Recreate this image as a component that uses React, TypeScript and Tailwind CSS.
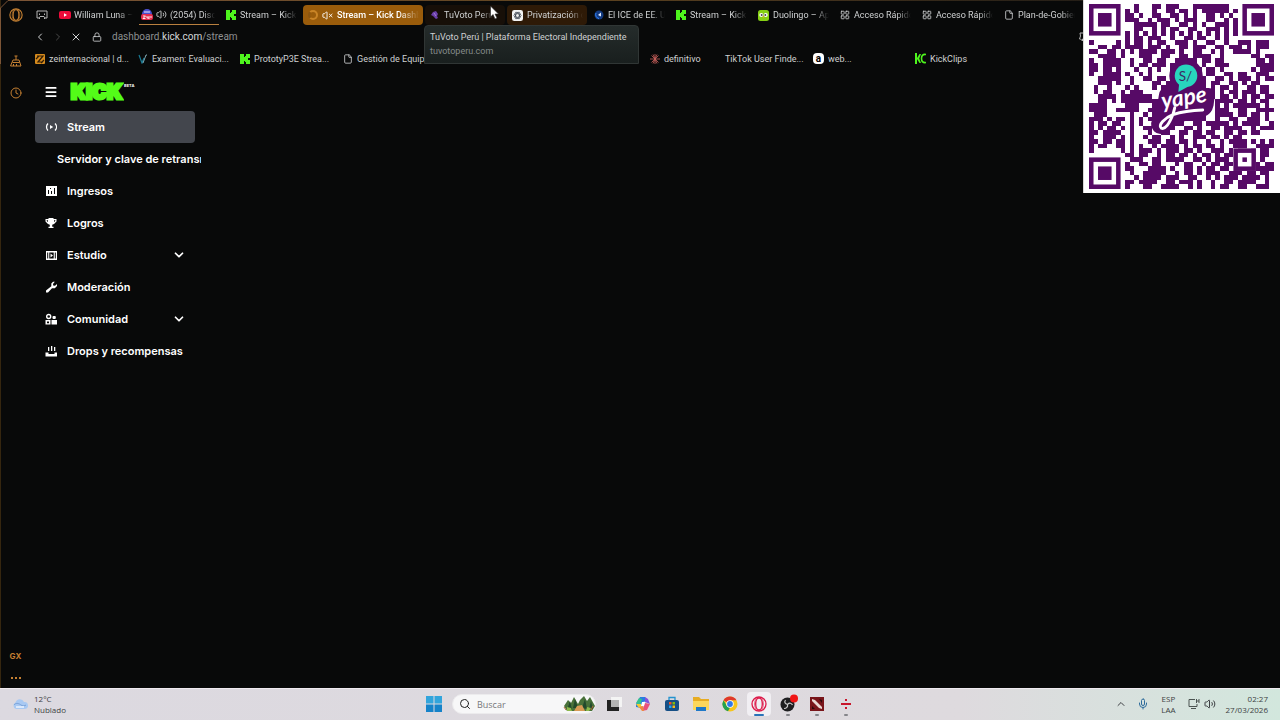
import type { ReactNode } from "react";
import clsx from "clsx";
import {
  ChevronDown,
  ChevronLeft,
  ChevronRight,
  ChevronUp,
  Clock,
  File,
  LayoutGrid,
  Lock,
  Menu,
  Mic,
  Search,
  Volume2,
  VolumeX,
  X,
} from "lucide-react";

const QR_ROWS = [
  "..........#...##.###...########..........",
  "........#.#...#..##.##.#.######.#........",
  "........##.#..##..##.#.#..##.#.#.........",
  "........###..#.###.#.###..##..#.#........",
  "..........#####.##..##.#.#..###.#........",
  "..........##..#.#.##..##..###.#.#........",
  "........#.#.#.#.#.#.#.#.#.#.#.#.#........",
  "........#.##.###..#..##.##..#.#..........",
  "#.....#.#.##.#.##..###.#..##..#..###.###.",
  "..##.##.####.###.#..##.###..##.###.#.###.",
  "##..##.#.#.####.###.#..##..#.#..####.#...",
  "..####.#...###..##..##.####..#......##.##",
  "#..####..#..##.##..#####.##.##.......##.#",
  "##.####..#.##.###.######.#..###......####",
  "##.##.#...#..#.#..#######.##.#......#.###",
  "#..####.#..#.#....#######.##..##.##..###.",
  "..#####..#..##.##.########..##.#.###.#.##",
  "..###.#..#....##.#########.##..##.#.##...",
  ".#..#...#.#...#.##########.#.##.#..##.##.",
  ".#.##..#.###....############.#.##.###.##.",
  "..####.#######..############.##.#.#.##.##",
  "..##.#.###################..####.##.#.##.",
  "####....###...############..#.#.######.#.",
  "####..#####..##############.###..##..####",
  ".###.....#..#.############..####.##.##.#.",
  "###.#.##.#.#.#############..#..##..###.#.",
  "#.##.##..#.#..#######..##.#####.#.####..#",
  "#.#.##.#.#..##.####..##.#..##.####..#.###",
  "##.####..#...#..##..##.##.##..##.##.##...",
  "#..###.#.#..#.##..#.#..###.##.#.##.......",
  "##.##.##.#...###.##.##.#..#..#.####.#.#.#",
  "#.##..##.#.#..#.####.#.##.##.#..###..####",
  "#......#.#.###.#.###.##.#..###.#.##.#.##.",
  "........##.##..#.##.##.#.##.#.##......##.",
  ".........###..##.####..##.#.###.......#..",
  "........#..##.##...#.##..#.##.##.....#.##",
  "........##...####.#..##.#.##.##......####",
  ".........#..#####..#.##.#.###..###.##.##.",
  "..........#.####.###..##..#.#.###.####.#.",
  "........##.####..##.###.#..#..##.####..#.",
  "........#...##..####..#.#..#.##..##..###.",
];

const qrPath = QR_ROWS.flatMap((row, y) =>
  [...row].map((cell, x) => (cell === "#" ? `M${x} ${y}h1v1h-1z` : ""))
).join("");

function Finder({ x, y }: { x: number; y: number }) {
  return (
    <g>
      <rect x={x + 0.5} y={y + 0.5} width="6" height="6" fill="none" stroke="#560a66" />
      <rect x={x + 2} y={y + 2} width="3" height="3" fill="#560a66" />
    </g>
  );
}

function YapeQr() {
  return (
    <div className="absolute top-0 right-0 z-20 border-l border-[#d8d8d8] bg-white pt-1 pr-1.5 pb-1 pl-[5px]">
      <svg className="size-[185px]" viewBox="0 0 41 41" role="img" aria-label="Código QR de Yape">
        <path d={qrPath} fill="#560a66" shapeRendering="crispEdges" />
        <Finder x={0} y={0} />
        <Finder x={34} y={0} />
        <Finder x={0} y={34} />
        <rect x="32" y="32" width="5" height="5" fill="#fff" />
        <rect x="32.5" y="32.5" width="4" height="4" fill="none" stroke="#560a66" />
        <rect x="34" y="34" width="1" height="1" fill="#560a66" />
        <circle cx="21.5" cy="15.9" r="3.700" fill="#560a66" />
        <path
          d="M17 18.600h9.500q1.500 0 1.400 1.500l-.3 2.400q-.4 2-2.300 2.600l-5.200 1.100-2.500 2q-2 1.200-3.200 0-1-1.200-.4-2.600l1-2.500.5-3q.2-1.500 1.500-1.500z"
          fill="#560a66"
        />
        <circle cx="21.5" cy="15.9" r="2.500" fill="#28d5bd" />
        <path d="M20 17.400l-.2 2.100 2.200-1.200z" fill="#28d5bd" />
        <text x="19.9" y="17" className="font-['Lato']" fontSize="3" fill="#3c2861">
          S/
        </text>
        <text
          x="16.3"
          y="23.2"
          className="font-['Lato'] font-bold italic"
          fontSize="5"
          fill="#fff"
          transform="rotate(-9 16.3 23.2)"
        >
          yape
        </text>
        <path
          d="M25.200 23.500C22.500 23.600 20.500 23.900 18.600 24.500 17.800 26.500 16.900 27.900 16 27.500 15.200 26.900 16.800 25.200 18.600 24.500L19 23"
          fill="none"
          stroke="#fff"
          strokeWidth=".65"
          strokeLinecap="round"
        />
      </svg>
    </div>
  );
}

/* ---------- favicons ---------- */

function KickMark() {
  return (
    <svg className="size-2.5 shrink-0" viewBox="0 0 10 10" fill="#4ef51d" shapeRendering="crispEdges">
      <rect x="0" y="0" width="4" height="10" />
      <rect x="4" y="3" width="2" height="4" />
      <rect x="5" y="2" width="3" height="6" />
      <rect x="6" y="0" width="4" height="4" />
      <rect x="6" y="6" width="4" height="4" />
    </svg>
  );
}

function YouTubeMark() {
  return (
    <svg className="h-2.5 w-3 shrink-0" viewBox="0 0 12 10">
      <rect y="1" width="12" height="8" rx="2" fill="#ed0b3a" />
      <path d="M5 3.200v3.600L8 5z" fill="#fff" />
    </svg>
  );
}

function BadgeMark() {
  return (
    <svg className="size-3 shrink-0" viewBox="0 0 12 12">
      <circle cx="6" cy="5" r="5" fill="#4a4fd0" />
      <rect x="0" y="5" width="12" height="6" rx="2" fill="#e32b4c" />
      <path d="M3 3h6M2 7h2.500L2 9.500h2.500M6 7v2h2M8 7v3M10 7v2" stroke="#fff" fill="none" strokeWidth=".9" />
    </svg>
  );
}

function BallotMark() {
  return (
    <svg className="size-2.5 shrink-0" viewBox="0 0 10 10">
      <path d="M3 2l3-1 2 3-1 2 1 2-2 1-3-3-2-1z" fill="#6b3fa8" />
      <path d="M4 3l2 3" stroke="#a37fd6" />
    </svg>
  );
}

function AtomMark() {
  return (
    <svg className="size-[11px] shrink-0" viewBox="0 0 12 12" fill="none" stroke="#2c3440" strokeWidth=".7">
      <rect width="12" height="12" rx="2.500" fill="#f4f4f4" stroke="none" />
      <ellipse cx="6" cy="6" rx="4" ry="2" />
      <ellipse cx="6" cy="6" rx="4" ry="2" transform="rotate(60 6 6)" />
      <ellipse cx="6" cy="6" rx="4" ry="2" transform="rotate(120 6 6)" />
    </svg>
  );
}

function NewsMark() {
  return (
    <svg className="size-2.5 shrink-0" viewBox="0 0 10 10">
      <circle cx="5" cy="5" r="4.500" fill="#123a80" />
      <path d="M7 2.500L4 5l3 1.500z" fill="#dfeaff" />
      <path d="M2 3a4 4 0 0 0 3 5.500" stroke="#2f86ff" fill="none" />
    </svg>
  );
}

function OwlMark() {
  return (
    <svg className="size-[11px] shrink-0" viewBox="0 0 11 11">
      <rect width="11" height="11" rx="2.500" fill="#86d014" />
      <circle cx="3.300" cy="5" r="2" fill="#fff" />
      <circle cx="7.700" cy="5" r="2" fill="#fff" />
      <circle cx="3.700" cy="5" r="1" fill="#4b4b4b" />
      <circle cx="7.300" cy="5" r="1" fill="#4b4b4b" />
      <path d="M4.500 6.500h2l-1 1.500z" fill="#f7a61b" />
    </svg>
  );
}

function ZeMark() {
  return (
    <svg className="size-2.5 shrink-0" viewBox="0 0 10 10">
      <rect width="10" height="10" rx="1" fill="#d58a1d" />
      <path d="M2 2h6L3 8h5M1 5l3-3M6 9l3-3" stroke="#2e1c06" strokeWidth="1.200" fill="none" />
    </svg>
  );
}

function ExamMark() {
  return (
    <svg className="size-2.5 shrink-0" viewBox="0 0 10 10" fill="none">
      <path d="M1 1l3 8 2-5" stroke="#197a94" strokeWidth="1.200" />
      <path d="M5 9l3-8h1" stroke="#7fa9b4" />
    </svg>
  );
}

function BurstMark() {
  return (
    <svg className="size-2.5 shrink-0" viewBox="0 0 10 10" stroke="#c9605a" strokeWidth=".8">
      <path d="M5 0v10M0 5h10M1.500 1.500l7 7M8.500 1.500l-7 7M3 .5l4 9M7 .5l-4 9" />
    </svg>
  );
}

function AmazonMark() {
  return (
    <span className="flex size-[11px] shrink-0 items-center justify-center rounded-sm bg-white text-[10px] leading-none font-bold text-black">
      a
    </span>
  );
}

function ClipsMark() {
  return (
    <svg className="size-[11px] shrink-0" viewBox="0 0 11 11" fill="#4ef51d">
      <rect width="2" height="11" />
      <path d="M2 5l2.500-4h1.500L4.200 5.500 6 10H4.500L2 6z" />
      <path d="M11 1.500C7.500 1 6.500 3 6.500 5.500S7.500 10 11 9.500" fill="none" stroke="#4ef51d" strokeWidth="1.600" />
    </svg>
  );
}

function OperaMark({ className }: { className: string }) {
  return (
    <svg className={className} viewBox="0 0 16 16" fill="none" stroke="currentColor">
      <circle cx="8" cy="8" r="7" strokeWidth="1.300" />
      <ellipse cx="8" cy="8" rx="3.300" ry="6" strokeWidth="1.300" />
      <path d="M5.500 2.500C3 5 3 11 5.500 13.500M10.500 2.500C13 5 13 11 10.500 13.500" strokeWidth=".7" />
    </svg>
  );
}

/* ---------- browser chrome ---------- */

interface Tab {
  title: string;
  icon: ReactNode;
  state?: "active" | "playing" | "hover" | "grouped";
  tight?: boolean;
}

const tabs: Tab[] = [
  { title: "William Luna – Niñachay", icon: <YouTubeMark />, tight: true },
  { title: "(2054) Discord", icon: <BadgeMark />, state: "playing", tight: true },
  { title: "Stream – Kick Dashboard", icon: <KickMark /> },
  {
    title: "Stream – Kick Dashboard",
    icon: <span className="size-2.5 shrink-0 rounded-full border-2 border-[#c98426] border-l-[#8a5510]" />,
    state: "active",
  },
  { title: "TuVoto Perú", icon: <BallotMark />, state: "hover" },
  { title: "Privatización de", icon: <AtomMark />, state: "grouped" },
  { title: "El ICE de EE. UU.", icon: <NewsMark /> },
  { title: "Stream – Kick Dashboard", icon: <KickMark /> },
  { title: "Duolingo – Aprende", icon: <OwlMark /> },
  { title: "Acceso Rápido", icon: <LayoutGrid className="size-2.5 shrink-0" /> },
  { title: "Acceso Rápido", icon: <LayoutGrid className="size-2.5 shrink-0" /> },
  { title: "Plan-de-Gobierno", icon: <File className="size-2.5 shrink-0" /> },
];

function TabButton({ title, icon, state, tight }: Tab) {
  const active = state === "active";
  return (
    <button
      className={clsx(
        "flex h-5 shrink-0 items-center overflow-hidden pr-1",
        tight ? "gap-[3px] pl-0.5" : "gap-1 pl-[5px]",
        active ? "w-[120px] rounded-sm bg-[#9a5c0b] font-medium text-white" : "w-20",
        state === "playing" && "border-b border-[#b9803f]",
        state === "hover" && "rounded-sm bg-[#170f08]",
        state === "grouped" && "rounded-sm bg-[#2e1a07]"
      )}
    >
      {icon}
      {active && <VolumeX className="size-[11px] shrink-0" />}
      {state === "playing" && <Volume2 className="size-[11px] shrink-0" />}
      <span className="overflow-hidden whitespace-nowrap [mask-image:linear-gradient(to_right,black_75%,transparent)]">
        {title}
      </span>
    </button>
  );
}

const bookmarks = [
  { label: "zeinternacional | d...", icon: <ZeMark />, width: "w-[103px]" },
  { label: "Examen: Evaluaci...", icon: <ExamMark />, width: "w-[102px]" },
  { label: "PrototyP3E Strea...", icon: <KickMark />, width: "w-[103px]" },
  { label: "Gestión de Equipos", icon: <File className="size-2.5 shrink-0" />, width: "w-[307px]" },
  { label: "definitivo", icon: <BurstMark />, width: "w-[61px]" },
  { label: "TikTok User Finde...", icon: <span className="size-2.5 shrink-0" />, width: "w-[102px]" },
  { label: "web...", icon: <AmazonMark />, width: "w-[102px]" },
  { label: "KickClips", icon: <ClipsMark />, width: "w-[103px]" },
];

function BrowserChrome() {
  return (
    <header className="relative h-[69px] font-['Roboto','Inter',sans-serif] text-[9px] leading-3 text-[#cfd1d2]">
      <div className="flex h-[26px] items-center gap-0.5 overflow-hidden pt-1 pl-1">
        <button className="mr-[5px] w-3.5" aria-label="Espacio de trabajo">
          <svg className="h-2.5 w-3" viewBox="0 0 12 10" fill="none" stroke="#b5b5b5">
            <path d="M3 8H1V1h10v7H9M3 8l1-1.500h4L9 8l-1 1M3 8l1 1" />
            <path d="M3.500 3.500v1.500M8.500 3.500v1.500" />
          </svg>
        </button>
        {tabs.map((tab, i) => (
          <TabButton key={i} {...tab} />
        ))}
      </div>

      <div className="flex h-[22px] items-center pl-0.5">
        <button className="w-[18px]" aria-label="Atrás">
          <ChevronLeft className="size-3" />
        </button>
        <button className="w-[18px] text-[#4a4a4a]" aria-label="Adelante">
          <ChevronRight className="size-3" />
        </button>
        <button className="w-[22px]" aria-label="Detener">
          <X className="size-3" />
        </button>
        <Lock className="mr-2.5 size-2.5" />
        <span className="text-[10px] text-[#8d9091]">
          dashboard.<span className="text-[#d6d8d9]">kick.com</span>/stream
        </span>
        <svg className="mr-[190px] ml-auto size-3" viewBox="0 0 12 12" fill="none" stroke="#b5b5b5">
          <path d="M2 2h9v6H4.500v2L2.500 8H1.500l1-3z" />
        </svg>
      </div>

      <nav className="flex h-[21px] items-center overflow-hidden pl-[3px]" aria-label="Marcadores">
        {bookmarks.map((b) => (
          <a key={b.label} href="#" className={clsx("flex shrink-0 items-center gap-1 whitespace-nowrap", b.width)}>
            {b.icon}
            {b.label}
          </a>
        ))}
      </nav>

      <div
        role="tooltip"
        className="absolute top-[25px] left-[392px] z-10 h-[39px] w-[215px] rounded-t-sm border border-[#303635] bg-linear-to-b from-[#252c2b] to-[#191f1e] px-[5px] pt-[5px]"
      >
        <p className="whitespace-nowrap">TuVoto Perú | Plataforma Electoral Independiente</p>
        <p className="pt-0.5 text-[#858b8a]">tuvotoperu.com</p>
      </div>
      <svg className="absolute top-[5px] left-[457px] z-20 h-4 w-3" viewBox="0 0 12 16">
        <path d="M1.500 1v11l2.500-2.500L6 14l2-1-2-4h3.500z" fill="#fff" stroke="#222" strokeWidth=".6" />
      </svg>
    </header>
  );
}

function SideRail() {
  return (
    <aside className="relative flex w-8 shrink-0 flex-col items-center border-l border-[#35260f] pt-2 pr-0.5 text-[#c58032]">
      <svg className="absolute top-0 -left-px h-16 w-8" viewBox="0 0 32 64" fill="none" stroke="#7c5536">
        <path d="M.5 64V8L8 .5h24" />
      </svg>
      <button aria-label="Opera GX">
        <OperaMark className="size-3.5" />
      </button>
      <button className="mt-8" aria-label="GX Cleaner">
        <svg className="size-3.5" viewBox="0 0 14 14" fill="none" stroke="currentColor">
          <path d="M7 2v4M5.500 2h3M4 6h6M3.500 8.500h7M4 6L1.500 12H12L10 6M4.500 12V10M7.500 12v-2" />
        </svg>
      </button>
      <button className="mt-[19px]" aria-label="Historial">
        <Clock className="size-3" strokeWidth={2} />
      </button>
      <button className="mt-auto text-[8px] leading-3 font-bold" aria-label="GX Corner">
        GX
      </button>
      <button className="mt-3.5 mb-2 flex gap-0.5 py-px" aria-label="Más">
        <span className="size-0.5 bg-current" />
        <span className="size-0.5 bg-current" />
        <span className="size-0.5 bg-current" />
      </button>
    </aside>
  );
}

/* ---------- Kick dashboard ---------- */

function NavIcon({ children }: { children: ReactNode }) {
  return (
    <svg className="size-3 shrink-0" viewBox="0 0 12 12" fill="currentColor">
      {children}
    </svg>
  );
}

const navItems = [
  {
    label: "Ingresos",
    icon: (
      <path fillRule="evenodd" d="M1 1h11v10H1zM3 5v4h1V5zM6 6v3h1V6zM9 3v6h1V3zM5 3v1h1V3z" />
    ),
  },
  {
    label: "Logros",
    icon: (
      <path fillRule="evenodd" d="M3.500 1h5v1h3v2.500L9 7 7.200 7.800v2H8.500V11h-5V9.800h1.300v-2L3 7 .5 4.500V2h3zM1.700 3.200v.9L3 5V3.200zM10.300 3.200H9V5l1.300-.9z" />
    ),
  },
  {
    label: "Estudio",
    expandable: true,
    icon: (
      <path fillRule="evenodd" d="M1 2h11v9H1zM2.200 3.500v6h1v-6zM9.800 3.500v6h1v-6zM4.300 3.500v6h4.400v-6zM5.500 4.500l2.500 2-2.500 2z" />
    ),
  },
  {
    label: "Moderación",
    icon: <path d="M8 .8L6.300 2.500v2.800L1 9.500v2h2L7 7.200h2.800L12 5V3L10 4.800 8.200 4.500 8 3 9.800.8z" />,
  },
  {
    label: "Comunidad",
    expandable: true,
    icon: (
      <>
        <circle cx="3.700" cy="3.500" r="2" fill="none" stroke="currentColor" strokeWidth="1.400" />
        <rect x="7.500" y="3" width="3.300" height="3" rx="1" />
        <path fillRule="evenodd" d="M.5 7h5v4.500h-5zM2 8.500v1.800h2V8.500zM6.500 7H12v4.500H6.500z" />
      </>
    ),
  },
  {
    label: "Drops y recompensas",
    icon: <path d="M3 2h1.300v4H3zM6 1h1.300v5H6zM9 2h1.300v4H9zM.5 7.500h3V9h6V7.500h2.500v4H.5z" />,
  },
];

function DashboardNav() {
  return (
    <nav className="w-[169px] pl-[3px] text-[11px] leading-4 font-semibold text-white" aria-label="Kick">
      <div className="flex h-[42px] items-center gap-3 pt-[3px] pl-[9px]">
        <button aria-label="Menú">
          <Menu className="size-3.5" strokeWidth={3} />
        </button>
        <a href="#" className="flex items-center" aria-label="Kick beta">
          <svg className="h-5 w-[54px]" viewBox="0 0 54 20">
            <text
              x="1"
              y="17"
              className="font-['Inter'] font-black"
              fontSize="20"
              fill="#53fc18"
              stroke="#53fc18"
              strokeWidth="3"
            >
              KICK
            </text>
          </svg>
          <span className="pb-3 text-[4px] leading-none font-bold">BETA</span>
        </a>
      </div>

      <ul>
        <li>
          <a href="#" className="mr-[6px] flex h-8 items-center gap-2.5 rounded-sm bg-[#43464d] pl-2.5">
            <NavIcon>
              <path d="M5 4v4l3.200-2z" />
              <path
                d="M3 2.500C1 4.500 1 7.500 3 9.500M10 2.500c2 2 2 5 0 7"
                fill="none"
                stroke="currentColor"
                strokeWidth="1.300"
              />
            </NavIcon>
            Stream
          </a>
        </li>
        <li>
          <a href="#" className="flex h-8 items-center overflow-hidden pl-[22px] whitespace-nowrap">
            Servidor y clave de retransmisión
          </a>
        </li>
        {navItems.map((item) => (
          <li key={item.label}>
            <a href="#" className="flex h-8 items-center gap-2.5 pl-2.5 whitespace-nowrap">
              <NavIcon>{item.icon}</NavIcon>
              {item.label}
              {item.expandable && <ChevronDown className="mr-[15px] ml-auto size-3.5" strokeWidth={3} />}
            </a>
          </li>
        ))}
      </ul>
    </nav>
  );
}

/* ---------- taskbar ---------- */

const apps: { name: string; running?: boolean; focused?: boolean; art: ReactNode }[] = [
  {
    name: "Vista de tareas",
    art: (
      <>
        <rect x="5" y="1" width="11" height="10" fill="#f4f4f4" />
        <path d="M1 4h4v7h8v4H1z" fill="#222" />
        <rect x="5" y="4" width="8" height="7" fill="#b4b4b4" />
      </>
    ),
  },
  {
    name: "Copilot",
    art: (
      <>
        <path d="M5 1h5l2 4-4 1-2 6-5-1L1 8z" fill="#2a7de1" />
        <path d="M1 7l3-5 3 1-2 7z" fill="#35c08d" />
        <path d="M1 8h5l1 3-3 1z" fill="#f2c832" />
        <path d="M10 1l3 2 2 5-5-2z" fill="#8452dc" />
        <path d="M15 8l-3 6-5 1 3-8z" fill="#e9507c" />
        <path d="M4 11l4-1 1 5H7z" fill="#ef8743" />
        <path d="M7 6h3L9 10H6z" fill="#fff" />
      </>
    ),
  },
  {
    name: "Microsoft Store",
    art: (
      <>
        <path d="M5 4V1.500h6V4" fill="none" stroke="#2493cf" strokeWidth="1.300" />
        <rect x="1" y="4" width="14" height="11" rx="2" fill="#164f86" />
        <path d="M5 6h2.500v2.500H5z" fill="#f15325" />
        <path d="M8.500 6H11v2.500H8.500z" fill="#80bb0a" />
        <path d="M5 9.500h2.500V12H5z" fill="#22a5ee" />
        <path d="M8.500 9.500H11V12H8.500z" fill="#fdb913" />
      </>
    ),
  },
  {
    name: "Explorador de archivos",
    art: (
      <>
        <path d="M0 1h6l2 2h8v11H0z" fill="#e7ac23" />
        <path d="M0 5h16v9H0z" fill="#fcd75b" />
        <path d="M3 11h10v4H3z" fill="#1f78c8" />
      </>
    ),
  },
  {
    name: "Chrome",
    art: (
      <>
        <circle cx="8" cy="8" r="7.500" fill="#f6c51c" />
        <path d="M8 8L1.500 4.250A7.500 7.500 0 0 1 14.500 4.250H8z" fill="#df382b" />
        <path d="M1.500 4.250L5 10l3 1.500-2 3.800A7.500 7.500 0 0 1 1.500 4.250z" fill="#23a150" />
        <circle cx="8" cy="8" r="3.700" fill="#fff" />
        <circle cx="8" cy="8" r="2.900" fill="#2f79e8" />
      </>
    ),
  },
  { name: "Opera GX", focused: true, art: null },
  {
    name: "OBS Studio",
    running: true,
    art: (
      <>
        <circle cx="7.500" cy="8.500" r="7" fill="#1e1e20" />
        <path
          d="M7.500 8.500C5 8 4 6 5.500 4M7.500 8.500c2-2 4-1.500 5 .5M7.500 8.500c.5 2.500-1 4-3.500 4"
          fill="none"
          stroke="#ccc"
          strokeWidth="1.200"
        />
        <circle cx="14" cy="2.500" r="4" fill="#f01515" />
      </>
    ),
  },
  {
    name: "Dota 2",
    running: true,
    art: (
      <>
        <rect x="1" y="1" width="14" height="14" fill="#79151a" />
        <path d="M3 3l3 1 7 7v2l-3-1-7-7z" fill="#e9d7d2" />
        <path d="M10 3l3 1v3zM3 10l3 3H3z" fill="#2b090a" />
      </>
    ),
  },
  {
    name: "Fiebre",
    running: true,
    art: <path d="M3 7h10v2H3zM7 3h2v2H7zM7 11h2v2H7z" fill="#c8172c" />,
  },
];

function Taskbar() {
  return (
    <footer className="grid h-8 shrink-0 grid-cols-[1fr_auto_1fr] items-center bg-linear-to-r from-[#dcd9e0] via-[#dedade] via-75% to-[#d2e7dd] font-['Open_Sans','Noto_Sans',sans-serif] text-[8px] leading-[11px] text-[#3d3f43] shadow-[inset_0_1px_#efeaf0]">
      <button className="flex items-center gap-1.5 pl-3 text-left">
        <svg className="h-3.5 w-4" viewBox="0 0 16 14">
          <path d="M4 12a3.500 3.500 0 0 1-.5-6.500A4.500 4.500 0 0 1 12 5a3.500 3.500 0 0 1 1 7z" fill="#a9c9f2" />
          <path d="M2 8c2-3 6-1 7 0s4 1 5 0" fill="none" stroke="#7ba3da" />
          <path d="M4 10h8" stroke="#dce9fb" strokeWidth="2" />
        </svg>
        <span>
          12°C
          <br />
          Nublado
        </span>
      </button>

      <div className="flex items-center pl-1.5">
        <button className="mr-2.5" aria-label="Inicio">
          <svg className="size-4" viewBox="0 0 16 16" fill="#1683c9">
            <path d="M0 0h7.500v7.500H0zM8.500 0H16v7.500H8.500z" fill="#32a5dc" />
            <path d="M0 8.500h7.500V16H0zM8.500 8.500H16V16H8.500z" />
          </svg>
        </button>
        <label className="mr-[3px] flex h-5 w-36 items-center gap-1.5 rounded-full border border-[#ecebed] bg-[#f7f7f8] pl-1.5">
          <Search className="size-3 shrink-0 text-[#222]" aria-label="Buscar" />
          <input
            type="search"
            placeholder="Buscar"
            className="w-0 min-w-0 flex-1 bg-transparent text-[9px] outline-none placeholder:text-[#77777b]"
          />
          <svg className="h-4 w-8 shrink-0" viewBox="0 0 32 16">
            <path d="M1 10l4-6 3 3 3-6 4 7 2-4 4-4 3 5 3-4 5 9-3 5H4z" fill="#49713a" />
            <path d="M4 14l3-9 2 9zM10 12l2-9 3 9zM19 12l3-9 2 10zM26 13l2-8 2 8z" fill="#234a2c" />
            <path d="M14 10l5-1 3 6H11z" fill="#d99b55" />
            <path d="M4 11l4 1 1 3H4zM24 11l4 1-2 3h-3z" fill="#8db94a" />
            <path d="M1 11l2 3M30 10l-2 4" stroke="#b4683c" />
          </svg>
        </label>
        {apps.map((app) => (
          <button
            key={app.name}
            aria-label={app.name}
            className="flex w-[29px] justify-center"
          >
            <span
              className={clsx(
                "relative flex size-6 items-center justify-center rounded-sm",
                app.focused && "bg-[#f1eff3]"
              )}
            >
              {app.focused ? (
                <OperaMark className="size-4 text-[#dd1748]" />
              ) : (
                <svg className="size-4 overflow-visible" viewBox="0 0 16 16">
                  {app.art}
                </svg>
              )}
              {app.focused && <span className="absolute bottom-0 h-0.5 w-2.5 rounded-full bg-[#2a73b8]" />}
              {app.running && <span className="absolute bottom-0 h-0.5 w-1 rounded-full bg-[#85858a]" />}
            </span>
          </button>
        ))}
      </div>

      <div className="flex items-center justify-end pr-3">
        <button className="mr-2.5" aria-label="Iconos ocultos">
          <ChevronUp className="size-3" />
        </button>
        <button className="mr-3" aria-label="Micrófono">
          <Mic className="size-3 text-[#2e6c9c]" />
        </button>
        <button className="mr-3 text-center" aria-label="Idioma: ESP LAA">
          ESP
          <br />
          LAA
        </button>
        <button className="mr-2.5 flex gap-1" aria-label="Red y volumen">
          <svg className="size-3" viewBox="0 0 12 12" fill="none" stroke="#4b5351">
            <path d="M7 1.500H1v7h8V6M3 10.500h5M8.500 1v4M11 1v4M8.500 3H11" />
          </svg>
          <Volume2 className="size-3" />
        </button>
        <button className="text-right">
          02:27
          <br />
          27/03/2026
        </button>
      </div>
    </footer>
  );
}

export default function App() {
  return (
    <div className="relative flex min-h-screen flex-col overflow-hidden bg-[#080909] font-['Inter','Liberation_Sans',sans-serif]">
      <div className="absolute inset-x-2 top-0 h-px bg-linear-to-r from-[#7c5536] via-[#5f4420] via-45% to-[#111]" />
      <div className="flex flex-1">
        <SideRail />
        <div className="min-w-0 flex-1">
          <BrowserChrome />
          <main>
            <DashboardNav />
          </main>
        </div>
      </div>
      <Taskbar />
      <YapeQr />
    </div>
  );
}
